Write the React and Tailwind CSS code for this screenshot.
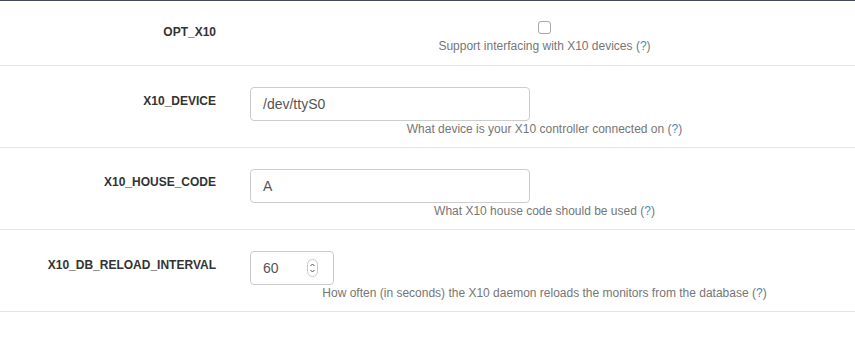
import React from 'react'

const font = { fontFamily: '"Liberation Sans", Arial, Helvetica, sans-serif' }

function Help() {
  return (
    <>
      {' '}(<a className="text-[#3c8dbc] cursor-pointer">?</a>)
    </>
  )
}

function Row({ label, labelPt, contentPt, children, desc }) {
  return (
    <div className="flex border-b border-[#e6e6e6]">
      <div className={`w-[234px] shrink-0 pr-[18px] text-right text-[12px] leading-[17px] font-bold text-[#333] ${labelPt}`}>
        {label}
      </div>
      <div className={`flex-1 pb-[9px] ${contentPt}`}>
        {children}
        <p className="text-center text-[12px] leading-[17px] text-[#767676]">
          {desc}
          <Help />
        </p>
      </div>
    </div>
  )
}

function TextInput({ value, width }) {
  return (
    <input
      type="text"
      defaultValue={value}
      className={`ml-4 block h-[34px] ${width} rounded-[4px] border border-[#cccccc] bg-white px-3 text-[14px] text-[#555] outline-none`}
    />
  )
}

function Spinner() {
  return (
    <svg width="11" height="18" viewBox="0 0 11 18" className="block">
      <rect x="0.5" y="0.5" width="10" height="17" rx="5" fill="#fff" stroke="#c8c8c8" />
      <path d="M3.5 7 L5.5 5 L7.5 7" fill="none" stroke="#555" strokeWidth="1" />
      <path d="M3.5 11 L5.5 13 L7.5 11" fill="none" stroke="#555" strokeWidth="1" />
    </svg>
  )
}

export default function App() {
  return (
    <div className="w-full bg-white border-t border-[#414c58]" style={font}>
      {/* OPT_X10 */}
      <div className="flex border-b border-[#e6e6e6]">
        <div className="w-[234px] shrink-0 pr-[18px] pt-[23px] text-right text-[12px] leading-[17px] font-bold text-[#333]">
          OPT_X10
        </div>
        <div className="flex-1 pt-5 pb-[10px]">
          <div className="flex justify-center">
            <span className="mb-1 block h-[13px] w-[13px] rounded-[3px] border border-[#a9a9a9] bg-white" />
          </div>
          <p className="text-center text-[12px] leading-[17px] text-[#767676]">
            Support interfacing with X10 devices
            <Help />
          </p>
        </div>
      </div>

      <Row
        label="X10_DEVICE"
        labelPt="pt-[27px]"
        contentPt="pt-[21px]"
        desc="What device is your X10 controller connected on"
      >
        <TextInput value="/dev/ttyS0" width="w-[280px]" />
      </Row>

      <Row
        label="X10_HOUSE_CODE"
        labelPt="pt-[26px]"
        contentPt="pt-[21px]"
        desc="What X10 house code should be used"
      >
        <TextInput value="A" width="w-[280px]" />
      </Row>

      <Row
        label="X10_DB_RELOAD_INTERVAL"
        labelPt="pt-[27px]"
        contentPt="pt-[21px]"
        desc="How often (in seconds) the X10 daemon reloads the monitors from the database"
      >
        <div className="ml-4 flex h-[34px] w-[84px] items-center justify-between rounded-[4px] border border-[#cccccc] bg-white pl-3 pr-[15px] text-[14px] text-[#555]">
          <span>60</span>
          <Spinner />
        </div>
      </Row>
    </div>
  )
}
